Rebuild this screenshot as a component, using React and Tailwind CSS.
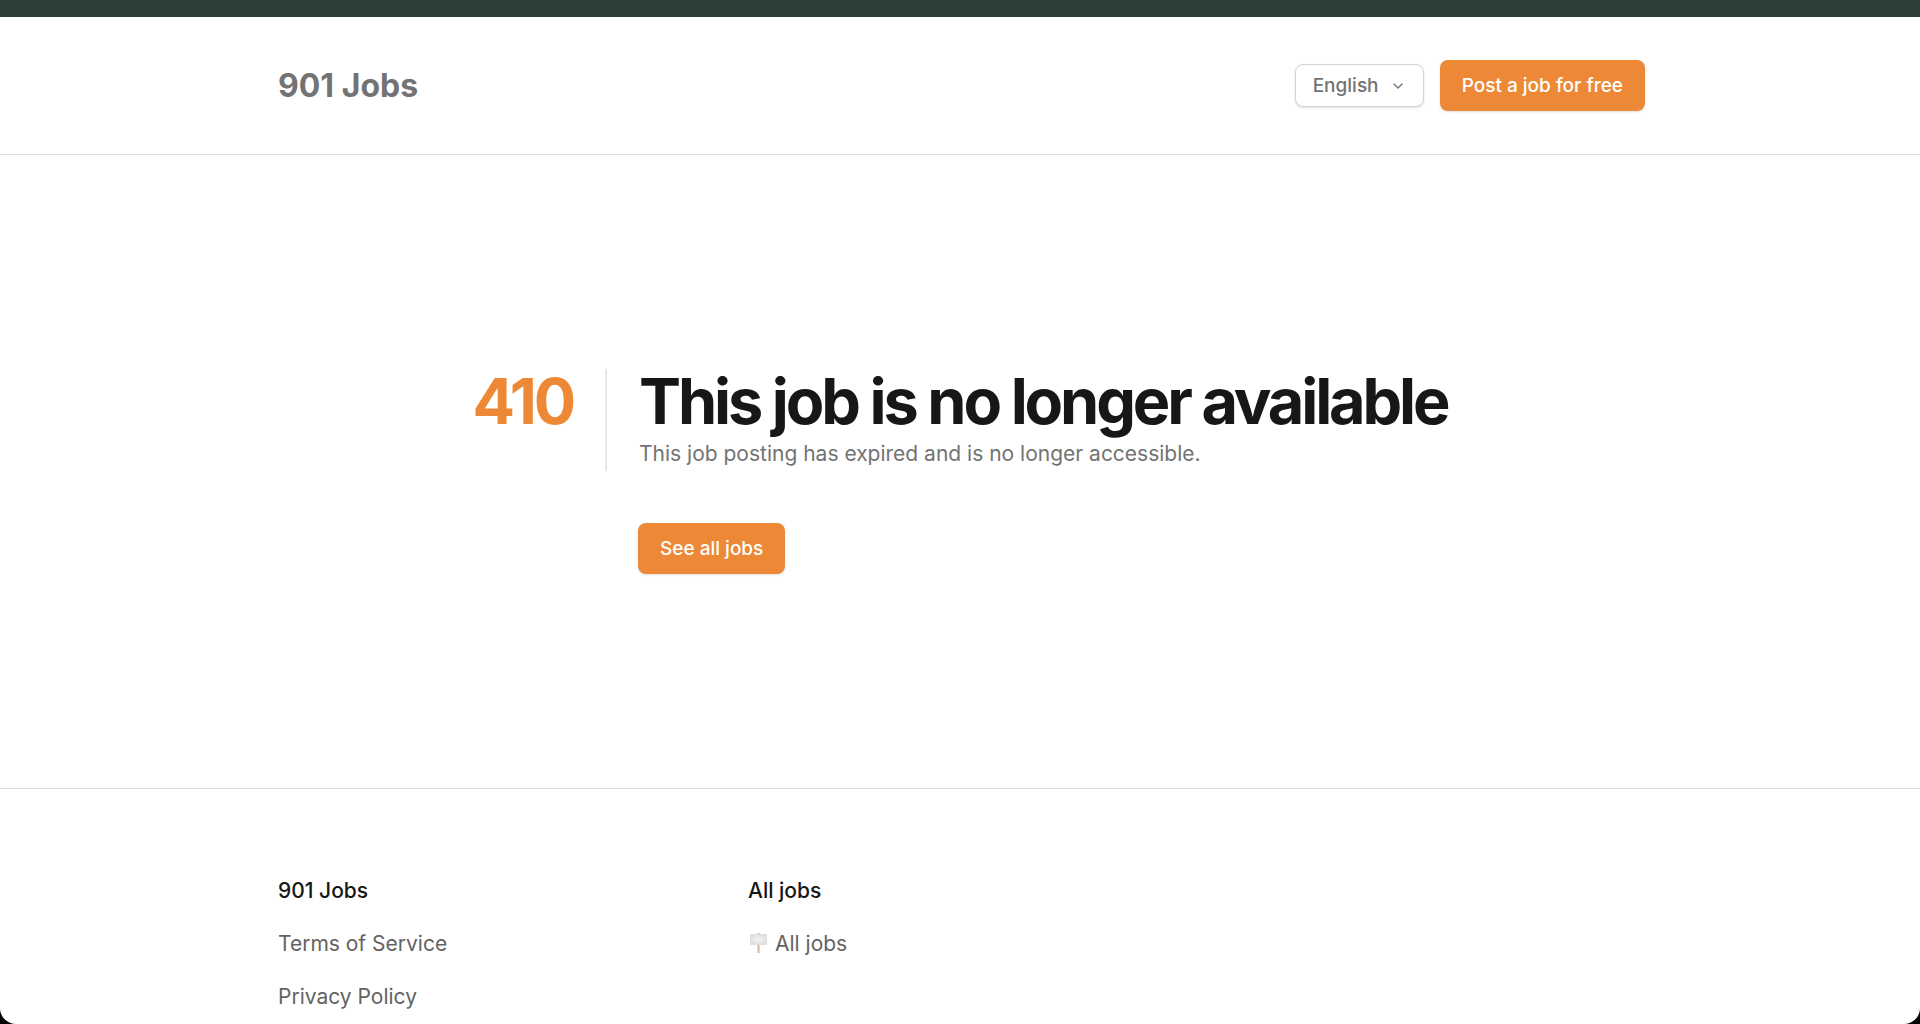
import { useState } from 'react';
import { ChevronDown } from 'lucide-react';
import { clsx } from 'clsx';

const LANGUAGES = ['English', 'Español', 'Français'];

const FOOTER_COLUMNS = [
  {
    title: '901 Jobs',
    links: [{ label: 'Terms of Service' }, { label: 'Privacy Policy' }],
  },
  {
    title: 'All jobs',
    links: [{ label: 'All jobs', icon: true }],
  },
];

const ButtonLink = ({ children, className }) => (
  <a
    href="#"
    className={clsx(
      'inline-flex items-center rounded-lg bg-[#ed8936] px-[22px] py-3 text-[19px] leading-[27px] font-medium text-white shadow-sm hover:bg-[#dd7a28]',
      className
    )}
  >
    {children}
  </a>
);

const PlacardIcon = () => (
  <svg className="h-[21px] w-[21px]" viewBox="0 0 21 21" aria-hidden="true">
    <defs>
      <radialGradient id="placard">
        <stop offset="0" stopColor="#f4f4f4" />
        <stop offset="1" stopColor="#dedede" />
      </radialGradient>
    </defs>
    <rect x="9.5" y="0" width="2" height="20" fill="#cdb79c" />
    <rect x="2" y="1" width="17" height="11" rx="0.5" fill="url(#placard)" />
  </svg>
);

const LanguageSelect = () => {
  const [language, setLanguage] = useState('English');

  return (
    <div className="relative">
      <select
        aria-label="Language"
        value={language}
        onChange={(e) => setLanguage(e.target.value)}
        className="h-[43px] w-[129px] appearance-none rounded-lg border border-[#d4d4d4] bg-white pt-px pl-[17px] text-[19px] font-medium text-[#737373] shadow-sm"
      >
        {LANGUAGES.map((name) => (
          <option key={name}>{name}</option>
        ))}
      </select>
      <ChevronDown className="pointer-events-none absolute top-3.5 right-[18px] h-4 w-4 text-[#737373]" />
    </div>
  );
};

const Header = () => (
  <header className="border-b border-[#dcdcdc]">
    <div className="mx-auto flex max-w-[1370px] items-center justify-between py-[43px] pl-[3px]">
      <a href="#" className="text-[32px] leading-9 font-bold text-[#737373]">
        901 Jobs
      </a>
      <div className="flex items-center gap-4">
        <LanguageSelect />
        <ButtonLink>Post a job for free</ButtonLink>
      </div>
    </div>
  </header>
);

const Footer = () => (
  <footer className="border-t border-[#dcdcdc]">
    <div className="mx-auto grid max-w-[1370px] grid-cols-3 gap-x-[43px] pt-[88px] pb-3.5 pl-[3px]">
      {FOOTER_COLUMNS.map((column) => (
        <div key={column.title} className="text-[21px] leading-[27px]">
          <h3 className="font-medium text-[#171717]">{column.title}</h3>
          <ul>
            {column.links.map((link) => (
              <li key={link.label} className="mt-[26px]">
                <a href="#" className="inline-flex items-center gap-1.5 text-[#636363] hover:text-[#171717]">
                  {link.icon && <PlacardIcon />}
                  {link.label}
                </a>
              </li>
            ))}
          </ul>
        </div>
      ))}
    </div>
  </footer>
);

const App = () => (
  <div className="bg-black font-['Inter',sans-serif]">
    <div className="flex min-h-screen flex-col overflow-hidden rounded-b-2xl bg-white">
      <div className="h-[17px] bg-[#2d3f3b]" />
      <Header />
      <main className="flex grow items-center justify-center py-[212px]">
        <div className="flex">
          <p className="text-[63px] leading-16 font-bold tracking-tighter text-[#ed8936]">410</p>
          <div className="ml-8">
            <div className="border-l-2 border-[#e8e8e8] pl-8">
              <h1 className="text-[63px] leading-16 font-bold tracking-tighter text-[#171717]">
                This job is no longer available
              </h1>
              <p className="mt-1.5 pb-0.5 text-[21px] leading-[30px] text-[#737373]">
                This job posting has expired and is no longer accessible.
              </p>
            </div>
            <ButtonLink className="mt-[52px] ml-[33px]">See all jobs</ButtonLink>
          </div>
        </div>
      </main>
      <Footer />
    </div>
  </div>
);

export default App;
